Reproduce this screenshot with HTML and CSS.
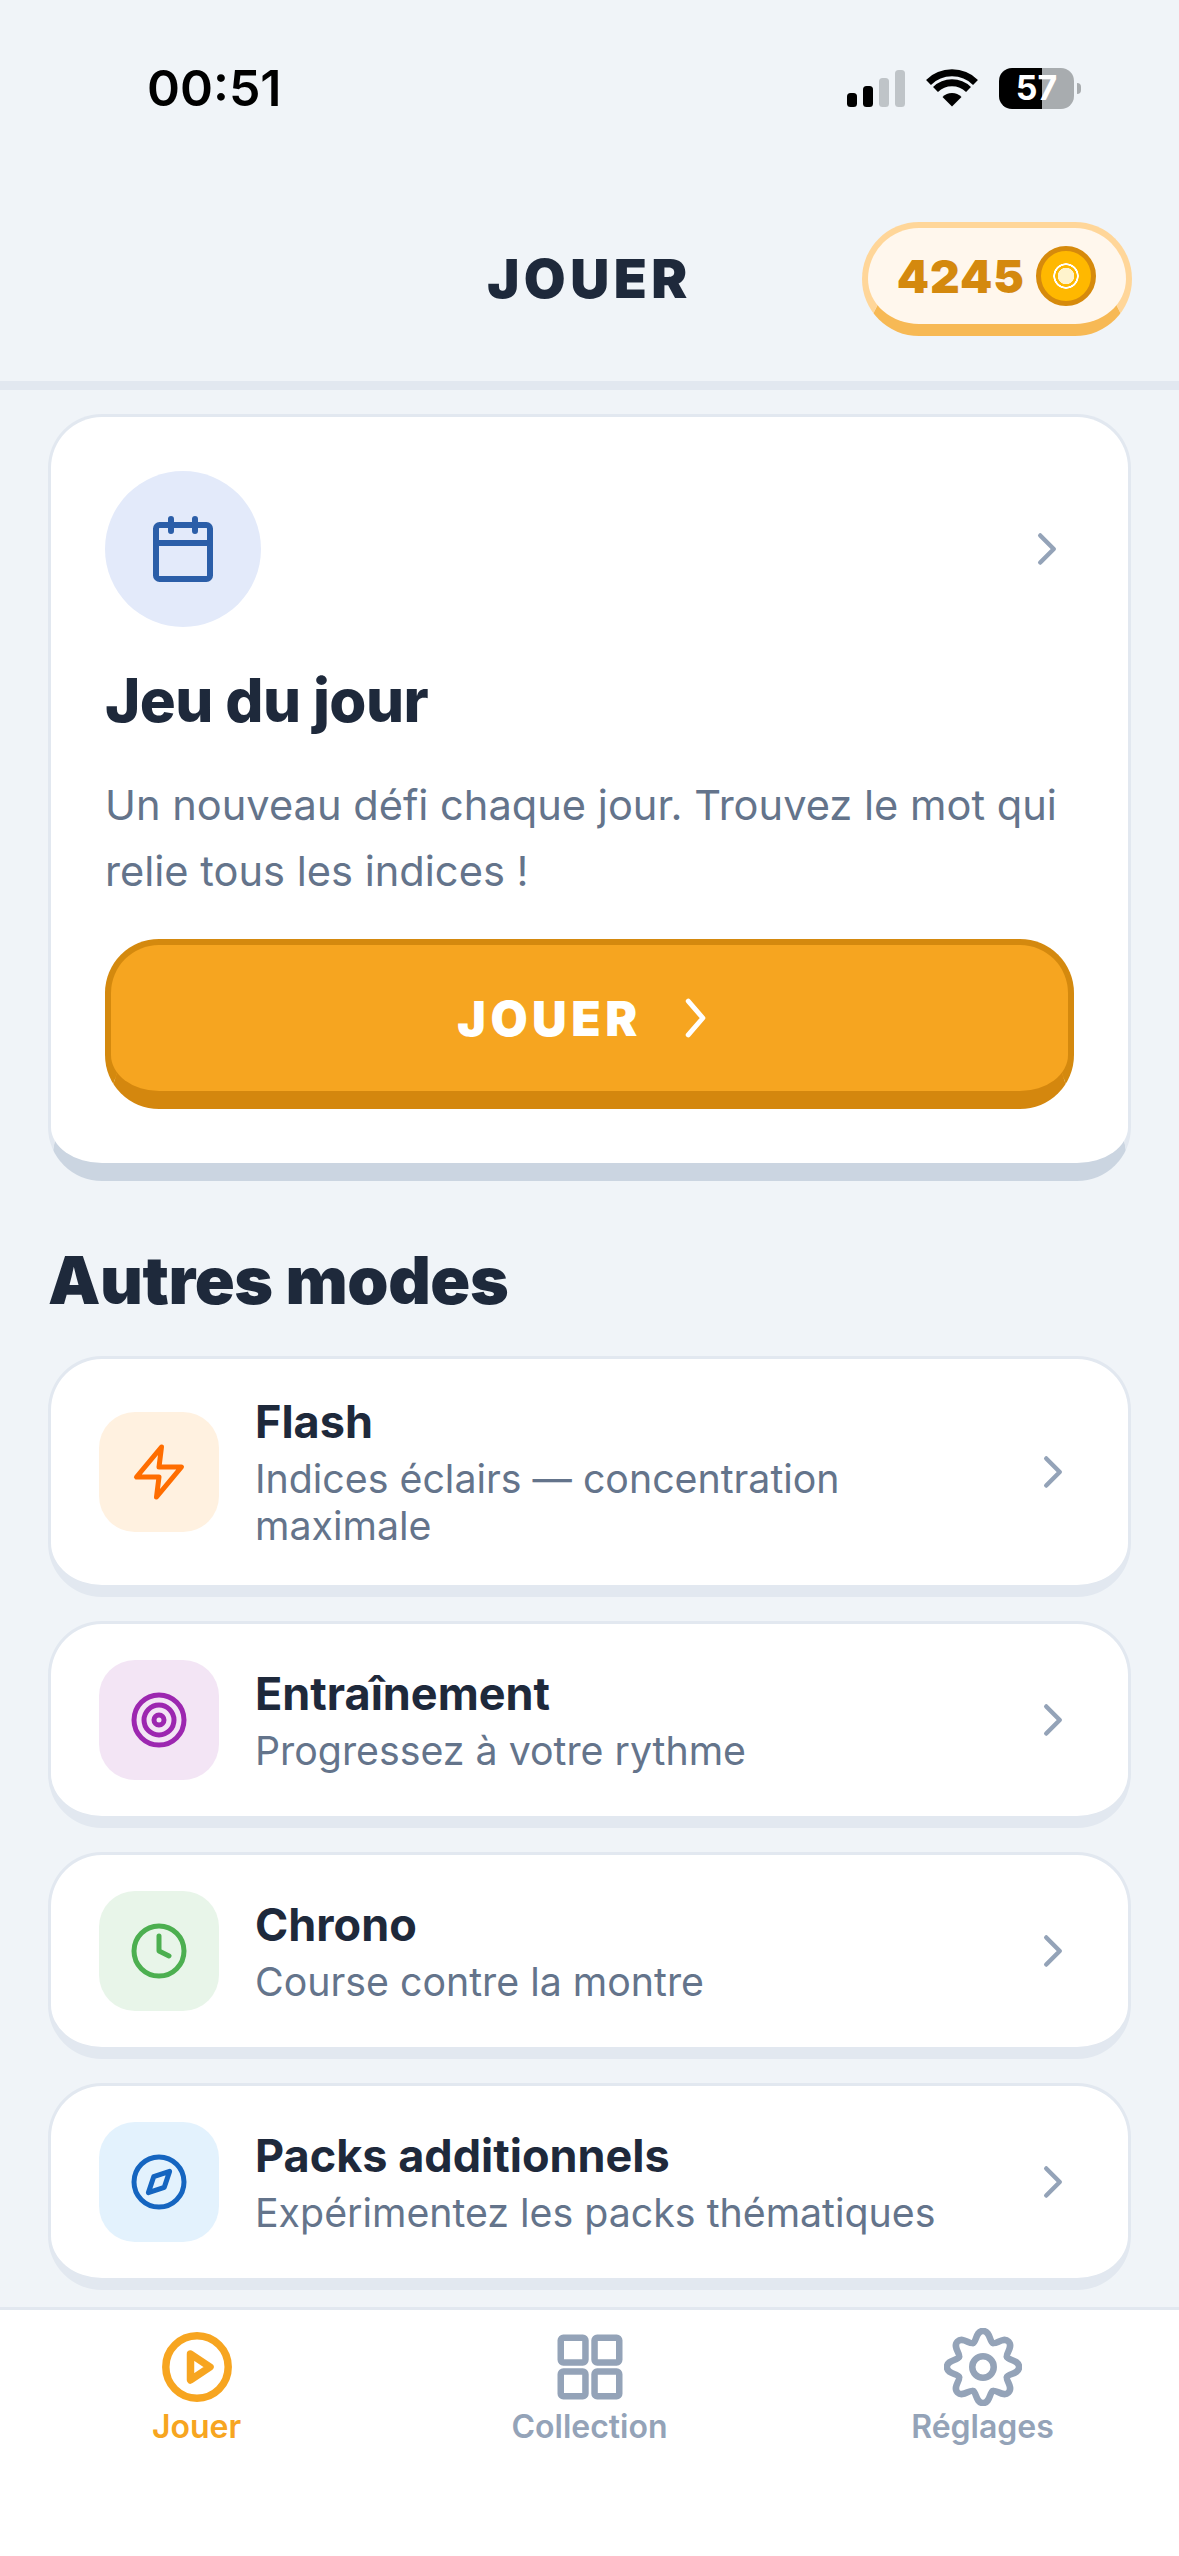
FILE: index.html
```html
<!DOCTYPE html>
<html lang="fr">
<head>
<meta charset="utf-8">
<title>Jouer</title>
<link rel="stylesheet" href="styles.css">
</head>
<body>
<div class="screen">
  <div class="status">
    <span class="time">00:51</span>
    <div class="status-icons">
      <svg class="signal" viewBox="0 0 58 37" width="58" height="37">
        <rect class="on" x="0" y="23" width="10" height="14" rx="3.5"/>
        <rect class="on" x="16" y="16" width="10" height="21" rx="3.5"/>
        <rect class="off" x="32" y="8" width="10" height="29" rx="3.5"/>
        <rect class="off" x="48" y="0" width="10" height="37" rx="3.5"/>
      </svg>
      <svg class="wifi" viewBox="0 0 52 38" width="52" height="38">
        <path d="M2.5 13.5A33.5 33.5 0 0 1 49.5 13.5" />
        <path d="M9.5 20.5A23.5 23.5 0 0 1 42.5 20.5" />
        <path class="wedge" d="M26 37.5L16.5 28A13.5 13.5 0 0 1 35.5 28Z" />
      </svg>
      <div class="battery"><span>57</span></div>
    </div>
  </div>

  <header class="topbar">
    <span></span>
    <h1>JOUER</h1>
    <div class="coins">
      <span class="coin-num">4245</span>
      <span class="coin"><span class="coin-core"></span></span>
    </div>
  </header>

  <main class="content">
    <section class="daily">
      <div class="daily-top">
        <div class="daily-icon">
          <svg class="ic cal" viewBox="0 0 24 24" width="72" height="72">
            <rect x="3" y="4" width="18" height="18" rx="1.2"/>
            <path d="M8 2v4M16 2v4M3 10h18"/>
          </svg>
        </div>
        <svg class="ic chev" viewBox="0 0 24 24" width="54" height="54"><path d="M9 6l6 6-6 6"/></svg>
      </div>
      <h2>Jeu du jour</h2>
      <p>Un nouveau défi chaque jour. Trouvez le mot qui relie tous les indices !</p>
      <button class="play">
        <span>JOUER</span>
        <svg class="ic play-chev" viewBox="0 0 24 24" width="54" height="54"><path d="M9 4.5l6.5 7.5-6.5 7.5"/></svg>
      </button>
    </section>

    <h3 class="section">Autres modes</h3>

    <div class="modes">
      <article class="mode">
        <div class="mode-icon orange">
          <svg class="ic" viewBox="0 0 24 24" width="60" height="60"><path d="M13 2L3 14h9l-1 8 10-12h-9z"/></svg>
        </div>
        <div class="mode-text">
          <h4>Flash</h4>
          <p>Indices éclairs — concentration maximale</p>
        </div>
        <svg class="ic chev" viewBox="0 0 24 24" width="54" height="54"><path d="M9 6l6 6-6 6"/></svg>
      </article>
      <article class="mode">
        <div class="mode-icon purple">
          <svg class="ic" viewBox="0 0 24 24" width="60" height="60"><circle cx="12" cy="12" r="10"/><circle cx="12" cy="12" r="6"/><circle cx="12" cy="12" r="2"/></svg>
        </div>
        <div class="mode-text">
          <h4>Entraînement</h4>
          <p>Progressez à votre rythme</p>
        </div>
        <svg class="ic chev" viewBox="0 0 24 24" width="54" height="54"><path d="M9 6l6 6-6 6"/></svg>
      </article>
      <article class="mode">
        <div class="mode-icon green">
          <svg class="ic" viewBox="0 0 24 24" width="60" height="60"><circle cx="12" cy="12" r="10"/><path d="M12 6v6l4 2"/></svg>
        </div>
        <div class="mode-text">
          <h4>Chrono</h4>
          <p>Course contre la montre</p>
        </div>
        <svg class="ic chev" viewBox="0 0 24 24" width="54" height="54"><path d="M9 6l6 6-6 6"/></svg>
      </article>
      <article class="mode">
        <div class="mode-icon blue">
          <svg class="ic" viewBox="0 0 24 24" width="60" height="60"><circle cx="12" cy="12" r="10"/><path d="M16.24 7.76l-2.12 6.36-6.36 2.12 2.12-6.36z"/></svg>
        </div>
        <div class="mode-text">
          <h4>Packs additionnels</h4>
          <p>Expérimentez les packs thématiques</p>
        </div>
        <svg class="ic chev" viewBox="0 0 24 24" width="54" height="54"><path d="M9 6l6 6-6 6"/></svg>
      </article>
    </div>
  </main>

  <nav class="tabs">
    <div class="tab active">
      <svg class="ic tab-play" viewBox="0 0 24 24" width="78" height="78"><circle cx="12" cy="12" r="9.6"/><path d="M10 8l6 4-6 4z"/></svg>
      <span>Jouer</span>
    </div>
    <div class="tab">
      <svg class="ic" viewBox="0 0 24 24" width="78" height="78"><rect x="3" y="3" width="7.6" height="7.6" rx=".8"/><rect x="13.4" y="3" width="7.6" height="7.6" rx=".8"/><rect x="3" y="13.4" width="7.6" height="7.6" rx=".8"/><rect x="13.4" y="13.4" width="7.6" height="7.6" rx=".8"/></svg>
      <span>Collection</span>
    </div>
    <div class="tab">
      <svg class="ic" viewBox="0 0 24 24" width="78" height="78">
        <circle cx="12" cy="12" r="3.3"/>
        <path d="M8.94 4.61C10.05 4.15 9.8 .9 12 .9C14.2 .9 13.95 4.15 15.06 4.61"/>
        <path transform="rotate(45 12 12)" d="M8.94 4.61C10.05 4.15 9.8 .9 12 .9C14.2 .9 13.95 4.15 15.06 4.61"/>
        <path transform="rotate(90 12 12)" d="M8.94 4.61C10.05 4.15 9.8 .9 12 .9C14.2 .9 13.95 4.15 15.06 4.61"/>
        <path transform="rotate(135 12 12)" d="M8.94 4.61C10.05 4.15 9.8 .9 12 .9C14.2 .9 13.95 4.15 15.06 4.61"/>
        <path transform="rotate(180 12 12)" d="M8.94 4.61C10.05 4.15 9.8 .9 12 .9C14.2 .9 13.95 4.15 15.06 4.61"/>
        <path transform="rotate(225 12 12)" d="M8.94 4.61C10.05 4.15 9.8 .9 12 .9C14.2 .9 13.95 4.15 15.06 4.61"/>
        <path transform="rotate(270 12 12)" d="M8.94 4.61C10.05 4.15 9.8 .9 12 .9C14.2 .9 13.95 4.15 15.06 4.61"/>
        <path transform="rotate(315 12 12)" d="M8.94 4.61C10.05 4.15 9.8 .9 12 .9C14.2 .9 13.95 4.15 15.06 4.61"/>
      </svg>
      <span>Réglages</span>
    </div>
  </nav>
</div>
</body>
</html>
```
FILE: styles.css
```css
* { box-sizing: border-box; margin: 0; padding: 0; }
html, body { width: 1179px; height: 2556px; overflow: hidden; }
body { background: #f0f4f8; font-family: "Inter", "Liberation Sans", sans-serif; color: #1e293b; }
.screen { width: 1179px; height: 2556px; display: flex; flex-direction: column; background: #f0f4f8; }

.status { height: 176px; flex: none; display: flex; align-items: center; justify-content: space-between; padding: 0 105px 0 147px; }
.time { font-size: 50px; font-weight: 600; color: #000; line-height: 1; }
.status-icons { display: flex; align-items: center; gap: 21px; }
.signal .on { fill: #000; }
.signal .off { fill: #bfc4c8; }
.wifi path { fill: none; stroke: #000; stroke-width: 7; }
.wifi .wedge { fill: #000; stroke: none; }
.battery { position: relative; width: 75px; height: 41px; border-radius: 13px; background: linear-gradient(90deg, #000 0 57.3%, #a8acaf 57.3% 100%); display: flex; align-items: center; justify-content: center; color: #fff; font-size: 34px; font-weight: 700; line-height: 1; }
.battery::after { content: ""; position: absolute; left: 78px; top: 15px; width: 4px; height: 11px; border-radius: 0 5px 5px 0; background: #a8acaf; }

.topbar { height: 214px; flex: none; border-bottom: 9px solid #e2e8f0; display: grid; grid-template-columns: 1fr auto 1fr; align-items: center; padding: 0 47px; }
.topbar h1 { font-size: 54px; font-weight: 900; letter-spacing: 4.5px; color: #1e293b; line-height: 1; }
.coins { justify-self: end; width: 270px; height: 114px; border: 6px solid #ffd699; border-bottom: 12px solid #f7b955; border-radius: 60px; background: #fff7ed; display: flex; align-items: center; justify-content: flex-end; gap: 11px; padding-right: 30px; }
.coin-num { font-size: 46px; font-weight: 900; color: #d4890e; line-height: 1; letter-spacing: 1px; }
.coin { width: 60px; height: 60px; border-radius: 50%; border: 5px solid #d68a0c; background: #ffb800; display: flex; align-items: center; justify-content: center; }
.coin-core { width: 26px; height: 26px; border-radius: 50%; background: radial-gradient(circle, #fff3cc 0 8px, #ffb800 8.5px 10.5px, #fff 11px 12.5px, #ffb800 13px); }

.content { flex: 1; min-height: 0; overflow: hidden; padding: 24px 48px 0; }

.ic { fill: none; stroke: currentColor; stroke-width: 2; stroke-linecap: round; stroke-linejoin: round; display: block; flex: none; }
.chev { color: #94a3b8; }

.daily { background: #fff; border: 3px solid #e2e8f0; border-bottom: 18px solid #cbd5e1; border-radius: 54px; padding: 54px; }
.daily-top { display: flex; align-items: center; justify-content: space-between; }
.daily-icon { width: 156px; height: 156px; border-radius: 50%; background: #e3eafa; display: flex; align-items: center; justify-content: center; }
.cal { color: #2b5ea8; }
.daily h2 { font-size: 60px; font-weight: 800; line-height: 84px; margin-top: 31px; letter-spacing: -0.6px; color: #1e293b; }
.daily p { font-size: 41.6px; font-weight: 400; line-height: 66px; margin-top: 30px; color: #64748b; }
.play { width: 100%; height: 170px; margin-top: 35px; border: 6px solid #d4890e; border-bottom: 18px solid #d4870e; border-radius: 54px; background: #f6a520; color: #fff; display: flex; align-items: center; justify-content: center; gap: 26px; font-family: inherit; font-size: 48px; font-weight: 900; letter-spacing: 4.5px; }
.play-chev { color: #fff; stroke-width: 2.2; }

.section { font-size: 66px; font-weight: 900; line-height: 80px; margin-top: 59px; margin-bottom: 36px; color: #1e293b; letter-spacing: -0.4px; }

.modes { display: flex; flex-direction: column; gap: 24px; }
.mode { display: flex; align-items: center; gap: 36px; background: #fff; border: 3px solid #e2e8f0; border-bottom-width: 12px; border-radius: 54px; padding: 36px 48px; }
.mode-icon { width: 120px; height: 120px; border-radius: 36px; display: flex; align-items: center; justify-content: center; flex: none; }
.orange { background: #fff1e0; color: #ff6d00; }
.purple { background: #f3e5f5; color: #9c27b0; }
.green { background: #e8f5e9; color: #4caf50; }
.blue { background: #e3f2fd; color: #1565c0; }
.mode-text { flex: 1; min-width: 0; }
.mode-text h4 { font-size: 45px; font-weight: 700; line-height: 54px; margin-bottom: 6px; color: #1e293b; }
.mode-text p { font-size: 39.3px; font-weight: 400; line-height: 47px; color: #64748b; }

.tabs { height: 249px; flex: none; background: #fff; border-top: 3px solid #e2e8f0; display: grid; grid-template-columns: repeat(3, 1fr); }
.tab { display: flex; flex-direction: column; align-items: center; padding-top: 18px; color: #94a3b8; }
.tab span { font-size: 32px; font-weight: 600; line-height: 42px; margin-top: 0; }
.tab.active { color: #f7a520; }
.tab-play { stroke-width: 2.3; }
```
